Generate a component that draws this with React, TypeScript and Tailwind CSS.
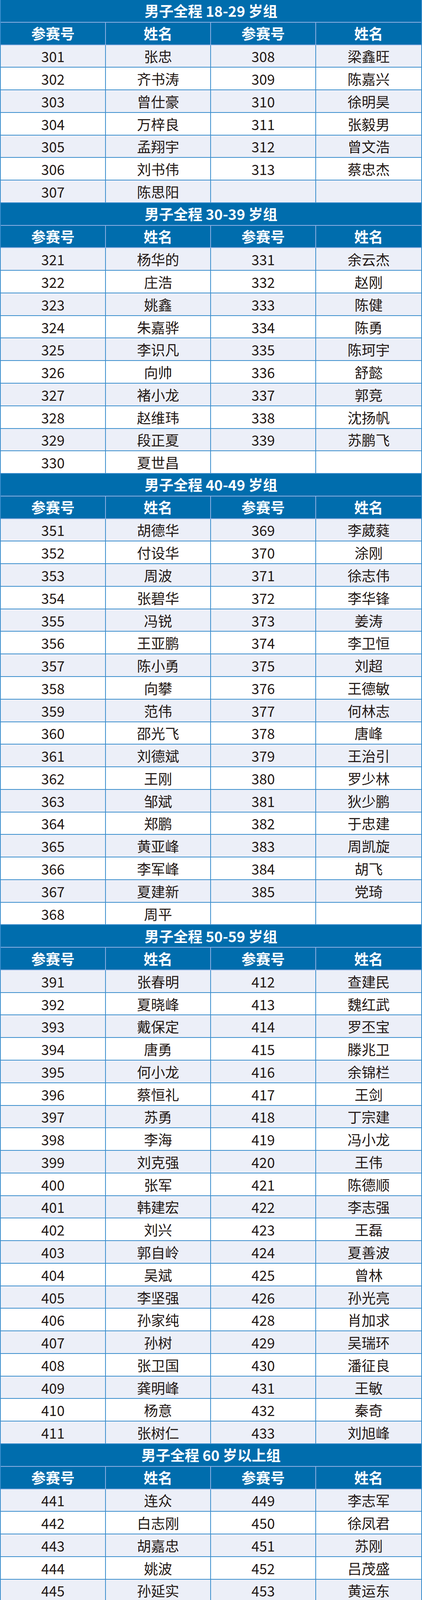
import React from 'react';

type Entry = [string, string];

type Group = {
  title: string;
  left: Entry[];
  right: Entry[];
};

const groups: Group[] = [
  {
    title: '男子全程 18-29 岁组',
    left: [
      ['301', '张忠'], ['302', '齐书涛'], ['303', '曾仕豪'], ['304', '万梓良'],
      ['305', '孟翔宇'], ['306', '刘书伟'], ['307', '陈思阳'],
    ],
    right: [
      ['308', '梁鑫旺'], ['309', '陈嘉兴'], ['310', '徐明昊'], ['311', '张毅男'],
      ['312', '曾文浩'], ['313', '蔡忠杰'],
    ],
  },
  {
    title: '男子全程 30-39 岁组',
    left: [
      ['321', '杨华的'], ['322', '庄浩'], ['323', '姚鑫'], ['324', '朱嘉骅'],
      ['325', '李识凡'], ['326', '向帅'], ['327', '褚小龙'], ['328', '赵维玮'],
      ['329', '段正夏'], ['330', '夏世昌'],
    ],
    right: [
      ['331', '余云杰'], ['332', '赵刚'], ['333', '陈健'], ['334', '陈勇'],
      ['335', '陈珂宇'], ['336', '舒懿'], ['337', '郭竞'], ['338', '沈扬帆'],
      ['339', '苏鹏飞'],
    ],
  },
  {
    title: '男子全程 40-49 岁组',
    left: [
      ['351', '胡德华'], ['352', '付设华'], ['353', '周波'], ['354', '张碧华'],
      ['355', '冯锐'], ['356', '王亚鹏'], ['357', '陈小勇'], ['358', '向攀'],
      ['359', '范伟'], ['360', '邵光飞'], ['361', '刘德斌'], ['362', '王刚'],
      ['363', '邹斌'], ['364', '郑鹏'], ['365', '黄亚峰'], ['366', '李军峰'],
      ['367', '夏建新'], ['368', '周平'],
    ],
    right: [
      ['369', '李葳蕤'], ['370', '涂刚'], ['371', '徐志伟'], ['372', '李华锋'],
      ['373', '姜涛'], ['374', '李卫恒'], ['375', '刘超'], ['376', '王德敏'],
      ['377', '何林志'], ['378', '唐峰'], ['379', '王治引'], ['380', '罗少林'],
      ['381', '狄少鹏'], ['382', '于忠建'], ['383', '周凯旋'], ['384', '胡飞'],
      ['385', '党琦'],
    ],
  },
  {
    title: '男子全程 50-59 岁组',
    left: [
      ['391', '张春明'], ['392', '夏晓峰'], ['393', '戴保定'], ['394', '唐勇'],
      ['395', '何小龙'], ['396', '蔡恒礼'], ['397', '苏勇'], ['398', '李海'],
      ['399', '刘克强'], ['400', '张军'], ['401', '韩建宏'], ['402', '刘兴'],
      ['403', '郭自岭'], ['404', '吴斌'], ['405', '李坚强'], ['406', '孙家纯'],
      ['407', '孙树'], ['408', '张卫国'], ['409', '龚明峰'], ['410', '杨意'],
      ['411', '张树仁'],
    ],
    right: [
      ['412', '查建民'], ['413', '魏红武'], ['414', '罗丕宝'], ['415', '滕兆卫'],
      ['416', '余锦栏'], ['417', '王剑'], ['418', '丁宗建'], ['419', '冯小龙'],
      ['420', '王伟'], ['421', '陈德顺'], ['422', '李志强'], ['423', '王磊'],
      ['424', '夏善波'], ['425', '曾林'], ['426', '孙光亮'], ['428', '肖加求'],
      ['429', '吴瑞环'], ['430', '潘征良'], ['431', '王敏'], ['432', '秦奇'],
      ['433', '刘旭峰'],
    ],
  },
  {
    title: '男子全程 60 岁以上组',
    left: [
      ['441', '连众'], ['442', '白志刚'], ['443', '胡嘉忠'], ['444', '姚波'],
      ['445', '孙延实'], ['446', '范茂滨'], ['447', '谢群'], ['448', '杨玉刚'],
    ],
    right: [
      ['449', '李志军'], ['450', '徐凤君'], ['451', '苏刚'], ['452', '吕茂盛'],
      ['453', '黄运东'], ['454', '刘建明'], ['455', '张叔永'], ['456', '周有成'],
    ],
  },
];

// header cells: 参赛号 / 姓名, twice
const HeaderRow = () => (
  <div className="grid grid-cols-4 h-[57.77px] bg-[#006dad] border-b-2 border-[#8fb0e3] text-white font-bold text-[37px]">
    <div className="flex items-center justify-center border-r-2 border-[#8fb0e3]">参赛号</div>
    <div className="flex items-center justify-center border-r-2 border-[#8fb0e3]">姓名</div>
    <div className="flex items-center justify-center border-r-2 border-[#8fb0e3]">参赛号</div>
    <div className="flex items-center justify-center">姓名</div>
  </div>
);

const DataRow = ({ a, b, odd }: { a?: Entry; b?: Entry; odd: boolean }) => (
  <div
    className={`grid grid-cols-4 h-[57.77px] border-b-2 border-[#3b8ecd] text-[36px] text-[#231815] ${
      odd ? 'bg-[#eceff8]' : 'bg-white'
    }`}
  >
    <div className="flex items-center justify-center border-r-2 border-[#3b8ecd]">{a?.[0]}</div>
    <div className="flex items-center justify-center border-r-2 border-[#3b8ecd]">{a?.[1]}</div>
    <div className="flex items-center justify-center border-r-2 border-[#3b8ecd]">{b?.[0]}</div>
    <div className="flex items-center justify-center">{b?.[1]}</div>
  </div>
);

const GroupTable = ({ group }: { group: Group }) => {
  const count = Math.max(group.left.length, group.right.length);
  const rows = Array.from({ length: count }, (_, i) => i);
  return (
    <div>
      <div className="flex items-center justify-center h-[57.77px] bg-[#006dad] border-b-2 border-[#8fb0e3] text-white font-bold text-[37px]">
        {group.title}
      </div>
      <HeaderRow />
      {rows.map((i) => (
        <DataRow key={i} a={group.left[i]} b={group.right[i]} odd={i % 2 === 0} />
      ))}
    </div>
  );
};

export default function App() {
  return (
    <div className="w-full overflow-hidden bg-white border-x-2 border-[#3b8ecd] leading-none font-['Noto_Sans_CJK_SC','Noto_Sans',sans-serif]">
      {groups.map((g) => (
        <GroupTable key={g.title} group={g} />
      ))}
    </div>
  );
}
